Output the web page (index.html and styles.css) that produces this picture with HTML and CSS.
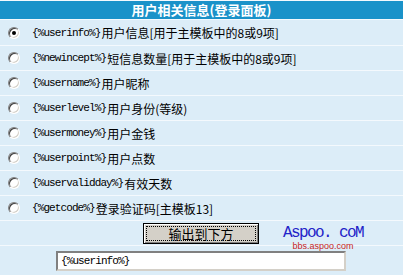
FILE: index.html
```html
<!DOCTYPE html>
<html lang="zh-CN">
<head>
    <meta charset="UTF-8">
    <title>用户相关信息</title>
    <link rel="stylesheet" href="styles.css">
</head>
<body>
    <div class="panel">
        <div class="panel-title">用户相关信息(登录面板)</div>

        <label class="row first">
            <span class="radio checked"></span>
            <span class="code">{%userinfo%}</span><span class="desc">用户信息[用于主模板中的8或9项]</span>
        </label>
        <label class="row">
            <span class="radio"></span>
            <span class="code">{%newincept%}</span><span class="desc">短信息数量[用于主模板中的8或9项]</span>
        </label>
        <label class="row">
            <span class="radio"></span>
            <span class="code">{%username%}</span><span class="desc">用户昵称</span>
        </label>
        <label class="row">
            <span class="radio"></span>
            <span class="code">{%userlevel%}</span><span class="desc">用户身份(等级)</span>
        </label>
        <label class="row">
            <span class="radio"></span>
            <span class="code">{%usermoney%}</span><span class="desc">用户金钱</span>
        </label>
        <label class="row">
            <span class="radio"></span>
            <span class="code">{%userpoint%}</span><span class="desc">用户点数</span>
        </label>
        <label class="row">
            <span class="radio"></span>
            <span class="code">{%uservalidday%}</span><span class="desc">有效天数</span>
        </label>
        <label class="row">
            <span class="radio"></span>
            <span class="code">{%getcode%}</span><span class="desc">登录验证码[主模板13]</span>
        </label>

        <div class="row button-row">
            <button class="out-btn"><span class="focus">输出到下方</span></button>
        </div>
        <div class="row input-row">
            <div class="out-box">{%userinfo%}</div>
        </div>

        <!-- site watermark over the corner -->
        <div class="watermark">
            <div class="wm-main">Aspoo. coM</div>
            <div class="wm-sub">bbs.aspoo.com</div>
        </div>
    </div>
</body>
</html>
```

FILE: styles.css
```css
* {
    margin: 0;
    padding: 0;
    box-sizing: border-box;
}

body {
    font-family: "Noto Sans CJK SC", sans-serif;
    font-size: 12px;
    color: #000000;
    background-color: #f4f9fd;
    width: 403px;
    height: 275px;
    overflow: hidden;
}

.panel {
    position: relative;
    display: flex;
    flex-direction: column;
    gap: 1px;
    padding-top: 1px;
    background-color: #f4f9fd;
    height: 275px;
}

.panel-title {
    height: 18px;
    line-height: 18px;
    background-color: #1a92c9;
    color: #ffffff;
    font-weight: bold;
    font-size: 13px;
    text-align: center;
}

.row {
    display: flex;
    align-items: center;
    height: 24px;
    background-color: #dcedf8;
    padding-left: 8px;
}

.row.first {
    height: 25px;
}

.radio {
    width: 12px;
    height: 12px;
    border-radius: 50%;
    background-color: #ffffff;
    border: 1px solid;
    border-color: #808080 #ffffff #ffffff #808080;
    box-shadow: inset 1px 1px 0 #404040, inset -1px -1px 0 #d4d0c8;
    margin-right: 12px;
    position: relative;
}

.radio.checked::after {
    content: "";
    position: absolute;
    left: 3px;
    top: 3px;
    width: 4px;
    height: 4px;
    border-radius: 50%;
    background-color: #000000;
}

.code {
    font-family: "Liberation Mono", monospace;
    font-size: 11px;
    letter-spacing: -0.9px;
    margin-right: 1px;
}

.desc {
    font-size: 12px;
}

.button-row {
    justify-content: flex-start;
    padding-left: 143px;
}

.out-btn {
    width: 116px;
    height: 21px;
    background-color: #d4d0c8;
    border: 1px solid #000000;
    box-shadow: inset 1px 1px 0 #ffffff, inset -1px -1px 0 #808080;
    font-family: "Noto Sans CJK SC", sans-serif;
    font-size: 13px;
    color: #000000;
    padding: 2px;
}

.out-btn .focus {
    display: block;
    height: 15px;
    line-height: 13px;
    border: 1px dotted #000000;
}

.input-row {
    height: 29px;
    align-items: flex-start;
    padding-left: 56px;
    padding-top: 5px;
}

.out-box {
    width: 290px;
    height: 20px;
    background-color: #ffffff;
    border: 2px solid;
    border-color: #808080 #d4d0c8 #d4d0c8 #808080;
    font-family: "Liberation Mono", monospace;
    font-size: 11px;
    letter-spacing: -0.9px;
    line-height: 16px;
    padding-left: 3px;
}

.watermark {
    position: absolute;
    left: 282px;
    top: 224px;
    width: 82px;
    text-align: center;
    pointer-events: none;
}

.wm-main {
    font-family: "Liberation Mono", monospace;
    font-size: 16px;
    line-height: 18px;
    color: #2323c8;
    letter-spacing: -1.6px;
    white-space: nowrap;
}

.wm-sub {
    font-family: "Liberation Sans", sans-serif;
    font-size: 9px;
    line-height: 9px;
    color: #c81e1e;
}
```
